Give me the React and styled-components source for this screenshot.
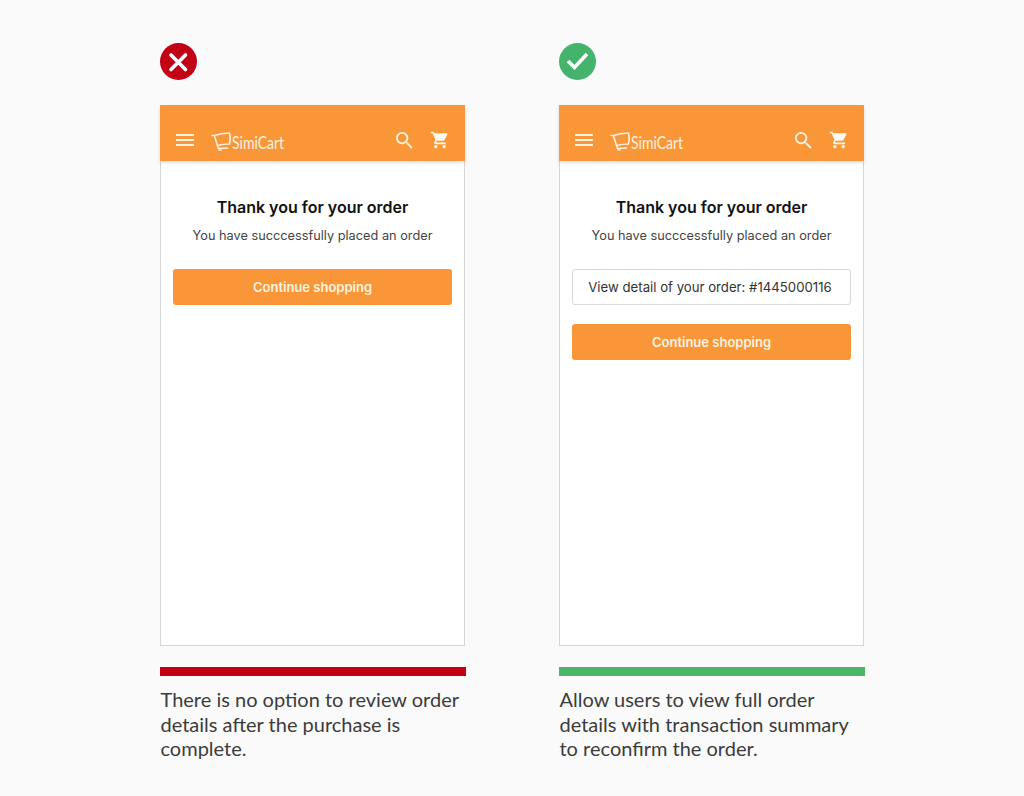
import styled, { createGlobalStyle } from "styled-components";
import { MdMenu, MdSearch, MdShoppingCart } from "react-icons/md";

const GlobalStyle = createGlobalStyle`
  html, body {
    margin: 0;
    padding: 0;
    background: #fafafa;
  }
`;

function Logo() {
  return (
    <LogoWrap>
      <svg width="21" height="19" viewBox="0 0 21 19" fill="none" stroke="#fdf1e0" strokeWidth="1.6" strokeLinecap="round" strokeLinejoin="round">
        <path d="M1 3.5 L3.5 3.5 C8 2 13 1.2 18.5 1 C19.5 5 19.5 8.5 18.5 12 C14 12 10 12.6 6.5 13.5 C5.5 10 4 6.5 3.5 3.5" />
        <path d="M6.5 13.5 L7.5 16.5 L16.5 16" />
        <path d="M8 18 L10 18" />
      </svg>
      <LogoText>SimiCart</LogoText>
    </LogoWrap>
  );
}

function Phone({ orderId }) {
  return (
    <PhoneFrame>
      <AppBar>
        <MenuIcon />
        <Logo />
        <BarActions>
          <SearchIcon />
          <CartIcon />
        </BarActions>
      </AppBar>
      <PhoneBody>
        <Title>Thank you for your order</Title>
        <Subtitle>You have succcessfully placed an order</Subtitle>
        <Actions>
          {orderId && <DetailButton>View detail of your order: #{orderId}</DetailButton>}
          <ContinueButton>Continue shopping</ContinueButton>
        </Actions>
      </PhoneBody>
    </PhoneFrame>
  );
}

function Column({ good, orderId, children }) {
  return (
    <ColumnWrap>
      <Badge $good={good}>
        {good ? (
          <svg width="37" height="37" viewBox="0 0 37 37" fill="none" stroke="#fff" strokeWidth="3.6">
            <path d="M9 18 L15.5 24.5 L28 11" />
          </svg>
        ) : (
          <svg width="37" height="37" viewBox="0 0 37 37" fill="none" stroke="#fff" strokeWidth="3.6" strokeLinecap="round">
            <path d="M11 12 L25.5 26.5 M25.5 12 L11 26.5" />
          </svg>
        )}
      </Badge>
      <Phone orderId={orderId} />
      <Bar $good={good} />
      <Caption>{children}</Caption>
    </ColumnWrap>
  );
}

export default function App() {
  return (
    <Page>
      <GlobalStyle />
      <Column>
        There is no option to review order
        <br />
        details after the purchase is
        <br />
        complete.
      </Column>
      <Column good orderId="1445000116">
        Allow users to view full order
        <br />
        details with transaction summary
        <br />
        to reconfirm the order.
      </Column>
    </Page>
  );
}

const Page = styled.div`
  width: 1024px;
  height: 796px;
  box-sizing: border-box;
  padding: 43px 0 0 160px;
  display: flex;
  gap: 93px;
  background: #fafafa;
  overflow: hidden;
`;

const ColumnWrap = styled.div`
  width: 306px;
  display: flex;
  flex-direction: column;
`;

const Badge = styled.div`
  width: 37px;
  height: 37px;
  border-radius: 50%;
  background: ${(p) => (p.$good ? "#44b36b" : "#c30114")};
  margin-bottom: 25px;
`;

const PhoneFrame = styled.div`
  width: 305px;
  height: 541px;
  box-sizing: border-box;
  border: 1px solid #d6d6d6;
  border-top: 0;
  background: #fff;
`;

const AppBar = styled.div`
  height: 56px;
  margin: 0 -1px;
  padding: 23px 15px 0 13px;
  box-sizing: border-box;
  background: #f99738;
  display: flex;
  align-items: flex-start;
  box-shadow: 0 2px 4px rgba(0, 0, 0, 0.12);
`;

const MenuIcon = styled(MdMenu)`
  width: 24px;
  height: 24px;
  color: #fdf1e0;
`;

const LogoWrap = styled.div`
  margin: 3px 0 0 14px;
  display: flex;
  align-items: center;
  height: 20px;
`;

const LogoText = styled.span`
  font-family: "Lato", sans-serif;
  font-weight: 400;
  font-size: 16.5px;
  color: #fdf1e0;
  margin: 3px 0 0 0;
  transform: scaleX(0.85);
  transform-origin: left center;
`;

const BarActions = styled.div`
  margin-left: auto;
  display: flex;
  align-items: center;
  height: 24px;
  gap: 14px;
`;

const SearchIcon = styled(MdSearch)`
  width: 23px;
  height: 23px;
  color: #fdf1e0;
`;

const CartIcon = styled(MdShoppingCart)`
  width: 20px;
  height: 20px;
  color: #fff8ec;
`;

const PhoneBody = styled.div`
  padding: 36px 12px 0;
  display: flex;
  flex-direction: column;
  align-items: center;
`;

const Title = styled.h2`
  margin: 0;
  font-family: "Inter", sans-serif;
  font-size: 16px;
  line-height: 20px;
  font-weight: 600;
  color: #111;
`;

const Subtitle = styled.p`
  margin: 10px 0 0;
  font-family: "Inter", sans-serif;
  font-size: 12.75px;
  line-height: 18px;
  font-weight: 400;
  color: #444;
`;

const Actions = styled.div`
  margin-top: 24px;
  display: flex;
  flex-direction: column;
  gap: 19px;
`;

const DetailButton = styled.div`
  width: 279px;
  height: 36px;
  box-sizing: border-box;
  border: 1px solid #d8d8d8;
  border-radius: 3px;
  background: #fff;
  display: flex;
  align-items: center;
  justify-content: center;
  padding-right: 3px;
  font-family: "Inter", sans-serif;
  font-size: 13.2px;
  color: #333;
  white-space: nowrap;
`;

const ContinueButton = styled.div`
  width: 279px;
  height: 36px;
  border-radius: 3px;
  background: #f99738;
  display: flex;
  align-items: center;
  justify-content: center;
  font-family: "Inter", sans-serif;
  font-size: 13px;
  font-weight: 600;
  color: #fff3e0;
`;

const Bar = styled.div`
  height: 9px;
  margin-top: 21px;
  background: ${(p) => (p.$good ? "#4db568" : "#c30114")};
`;

const Caption = styled.p`
  margin: 11px 0 0 0.5px;
  font-family: "Lato", sans-serif;
  font-size: 20px;
  line-height: 24.5px;
  color: #3c3c3c;
  white-space: nowrap;
`;
